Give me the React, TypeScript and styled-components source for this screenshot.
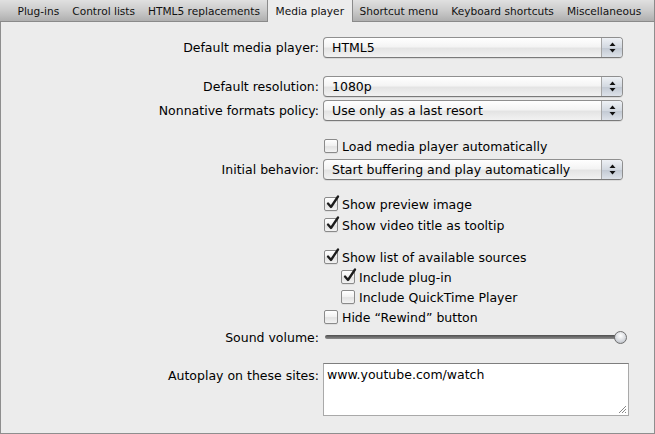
import React from "react";
import styled, { createGlobalStyle } from "styled-components";

const GlobalStyle = createGlobalStyle`
  html, body { margin: 0; padding: 0; background: #ececec; }
  * { box-sizing: border-box; }
`;

const Window = styled.div`
  width: 655px;
  height: 434px;
  display: flex;
  flex-direction: column;
  font-family: "DejaVu Sans", "Liberation Sans", sans-serif;
  color: #000;
  background: #ececec;
  overflow: hidden;
`;

const TabBar = styled.div`
  height: 22px;
  flex: none;
  display: flex;
  align-items: stretch;
  padding-left: 11px;
  background: linear-gradient(#e0e0e0, #cbcbcb 50%, #afafaf);
  border-bottom: 1px solid #8a8a8a;
  border-right: 1px solid #8a8a8a;
`;

const Tab = styled.div<{ $active?: boolean }>`
  display: flex;
  align-items: center;
  padding: 0 ${(p) => (p.$active ? "8px" : "6.5px")};
  font-size: 10.6px;
  white-space: nowrap;
  color: #111;
  position: relative;
  ${(p) =>
    p.$active &&
    `
    background: #ececec;
    border-left: 1px solid #8a8a8a;
    border-right: 1px solid #8a8a8a;
    margin-bottom: -1px;
  `}
`;

const Panel = styled.div`
  flex: 1;
  border-left: 1px solid #8e8e8e;
  border-right: 1px solid #8e8e8e;
  border-bottom: 1px solid #8e8e8e;
  padding-top: 15px;
  display: flex;
  flex-direction: column;
`;

const Row = styled.div<{ $top: number; $h: number }>`
  display: grid;
  grid-template-columns: 318px 1fr;
  column-gap: 4px;
  align-items: center;
  margin-top: ${(p) => p.$top}px;
  height: ${(p) => p.$h}px;
`;

const Label = styled.div`
  text-align: right;
  font-size: 12.5px;
  white-space: nowrap;
`;

const TopLabel = styled(Label)`
  align-self: start;
  padding-top: 5px;
`;

const Select = styled.div`
  width: 300px;
  height: 21px;
  display: flex;
  border: 1px solid #8f8f8f;
  border-bottom-color: #7a7a7a;
  border-radius: 4px;
  background: linear-gradient(#ffffff, #f4f4f4 45%, #e4e4e4 55%, #f2f2f2);
  box-shadow: 0 1px 0 rgba(0, 0, 0, 0.08);
  overflow: hidden;
`;

const SelectText = styled.div`
  flex: 1;
  padding-left: 8px;
  display: flex;
  align-items: center;
  font-size: 12.5px;
  white-space: nowrap;
`;

const SelectArrows = styled.div`
  width: 21px;
  border-left: 1px solid #a5a5a5;
  background: linear-gradient(#eef1f5, #d3d9e1 50%, #c1c8d2 52%, #dde2e9);
  display: flex;
  align-items: center;
  justify-content: center;
`;

const CheckRow = styled.label<{ $indent?: boolean }>`
  display: flex;
  align-items: center;
  gap: 4px;
  margin-left: ${(p) => (p.$indent ? "18px" : "1px")};
  font-size: 12.5px;
  white-space: nowrap;
`;

const Box = styled.span`
  width: 14px;
  height: 14px;
  flex: none;
  border: 1px solid #8a8a8a;
  border-radius: 2px;
  background: linear-gradient(#ffffff, #f0f0f0 50%, #e2e2e2 55%, #f3f3f3);
  box-shadow: 0 1px 0 rgba(0, 0, 0, 0.06);
  position: relative;
`;

const Tick = styled.svg`
  position: absolute;
  left: 1px;
  top: -3px;
`;

const Slider = styled.div`
  width: 302px;
  height: 14px;
  margin-left: 2px;
  display: flex;
  align-items: center;
  position: relative;
`;

const Track = styled.div`
  height: 4px;
  flex: 1;
  margin-right: 8px;
  border-radius: 2px;
  background: linear-gradient(#4e4e4e, #8c8c8c);
`;

const Knob = styled.div`
  position: absolute;
  right: 0;
  top: 1px;
  width: 13px;
  height: 13px;
  border-radius: 50%;
  border: 1px solid #6f6f6f;
  background: radial-gradient(circle at 50% 35%, #ffffff, #d4d7dc 60%, #a9adb4);
`;

const TextArea = styled.div`
  width: 306px;
  height: 53px;
  background: #fff;
  border: 1px solid #a9a9a9;
  border-top-color: #7e7e7e;
  padding: 3px 3px;
  font-size: 12.5px;
  position: relative;
`;

const Grip = styled.svg`
  position: absolute;
  right: 1px;
  bottom: 1px;
`;

const Arrows = () => (
  <svg width="7" height="11" viewBox="0 0 7 11">
    <path d="M3.5 0.5 L6.5 4 L0.5 4 Z" fill="#111" />
    <path d="M0.5 7 L6.5 7 L3.5 10.5 Z" fill="#111" />
  </svg>
);

const Dropdown = ({ value }: { value: string }) => (
  <Select>
    <SelectText>{value}</SelectText>
    <SelectArrows>
      <Arrows />
    </SelectArrows>
  </Select>
);

const Check = ({
  checked,
  indent,
  children,
}: {
  checked?: boolean;
  indent?: boolean;
  children: React.ReactNode;
}) => (
  <CheckRow $indent={indent}>
    <Box>
      {checked && (
        <Tick width="14" height="15" viewBox="0 0 14 15">
          <path
            d="M2 8.5 L5 12 L12 1.5"
            fill="none"
            stroke="#1c1c1c"
            strokeWidth="2.3"
            strokeLinecap="round"
            strokeLinejoin="round"
          />
        </Tick>
      )}
    </Box>
    {children}
  </CheckRow>
);

const tabs = [
  "Plug-ins",
  "Control lists",
  "HTML5 replacements",
  "Media player",
  "Shortcut menu",
  "Keyboard shortcuts",
  "Miscellaneous",
];

export default function App() {
  return (
    <Window>
      <GlobalStyle />
      <TabBar>
        {tabs.map((t) => (
          <Tab key={t} $active={t === "Media player"}>
            {t}
          </Tab>
        ))}
      </TabBar>
      <Panel>
        <Row $top={0} $h={21}>
          <Label>Default media player:</Label>
          <Dropdown value="HTML5" />
        </Row>
        <Row $top={18} $h={21}>
          <Label>Default resolution:</Label>
          <Dropdown value="1080p" />
        </Row>
        <Row $top={3} $h={21}>
          <Label>Nonnative formats policy:</Label>
          <Dropdown value="Use only as a last resort" />
        </Row>
        <Row $top={15} $h={20}>
          <span />
          <Check>Load media player automatically</Check>
        </Row>
        <Row $top={3} $h={21}>
          <Label>Initial behavior:</Label>
          <Dropdown value="Start buffering and play automatically" />
        </Row>
        <Row $top={14} $h={20}>
          <span />
          <Check checked>Show preview image</Check>
        </Row>
        <Row $top={1} $h={20}>
          <span />
          <Check checked>Show video title as tooltip</Check>
        </Row>
        <Row $top={12} $h={20}>
          <span />
          <Check checked>Show list of available sources</Check>
        </Row>
        <Row $top={0} $h={20}>
          <span />
          <Check checked indent>
            Include plug-in
          </Check>
        </Row>
        <Row $top={0} $h={20}>
          <span />
          <Check indent>Include QuickTime Player</Check>
        </Row>
        <Row $top={0} $h={20}>
          <span />
          <Check>Hide “Rewind” button</Check>
        </Row>
        <Row $top={0} $h={20}>
          <Label>Sound volume:</Label>
          <Slider>
            <Track />
            <Knob />
          </Slider>
        </Row>
        <Row $top={16} $h={53}>
          <TopLabel>Autoplay on these sites:</TopLabel>
          <TextArea>
            www.youtube.com/watch
            <Grip width="9" height="9" viewBox="0 0 9 9">
              <path d="M8 1 L1 8 M8 4 L4 8 M8 7 L7 8" stroke="#888" strokeWidth="1" />
            </Grip>
          </TextArea>
        </Row>
      </Panel>
    </Window>
  );
}
